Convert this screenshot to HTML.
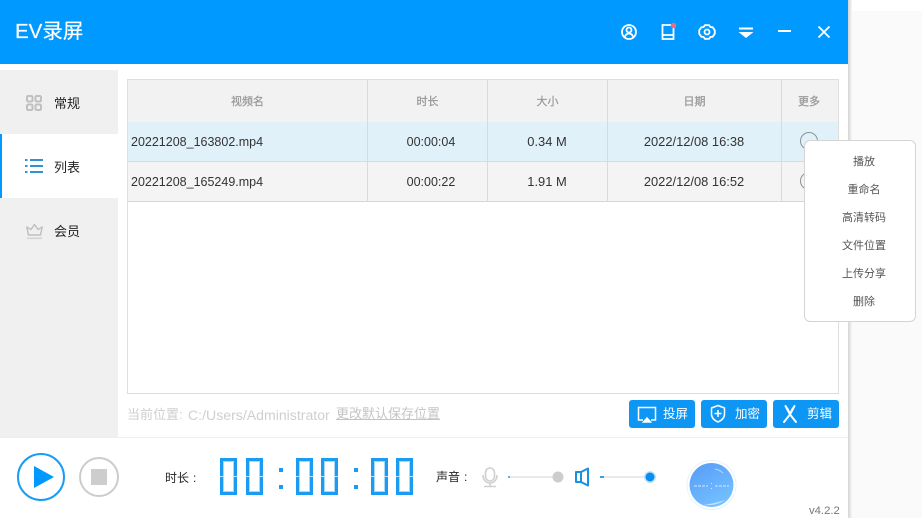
<!DOCTYPE html>
<html><head><meta charset="utf-8">
<style>
*{box-sizing:border-box;margin:0;padding:0}
html,body{width:922px;height:518px;overflow:hidden;background:#fff}
body{position:relative;font-family:"Liberation Sans","Noto Sans CJK SC",sans-serif;color:#333}
.a{position:absolute}
.t{position:absolute;white-space:nowrap;line-height:20px}
.c{text-align:center}
.th{font-size:11px;color:#999;top:92px;-webkit-text-stroke:.25px #999}
.td{font-size:12.5px;color:#333}
.dt{font-size:12.9px}
.side{font-size:13px;color:#222;left:54px;width:30px}
.m{font-size:11px;color:#555;left:804px;width:120px;text-align:center}
.btn{position:absolute;top:400px;width:66px;height:28px;background:#0e96f5;border-radius:3px}
.btn span{position:absolute;left:34px;top:4px;line-height:20px;font-size:12.5px;color:#fff;white-space:nowrap}
.btn svg{position:absolute;left:0;top:0}
.d{position:absolute;top:458px;width:17px;height:37px;border:3px solid #1a9cf2;box-shadow:inset 0 0 0 1px #a8d9fa;color:transparent;font-size:12px;line-height:20px;overflow:visible}
.d:before,.d:after{content:"";position:absolute;top:15px;height:1px;width:4px;background:#bfe3fb}
.d:before{left:-3px}.d:after{right:-3px}
.col{position:absolute;top:458px;width:5px;height:37px;color:transparent;font-size:12px;overflow:hidden}
.col:before,.col:after{content:"";position:absolute;left:0;width:4px;height:4px;background:#1a9cf2}
.col:before{top:10px}.col:after{top:27px}
</style></head>
<body>
<!-- backdrop right of window -->
<div class="a" style="left:848px;top:11px;width:74px;height:507px;background:#fafafa"></div>
<div class="a" style="left:848px;top:0;width:4px;height:518px;background:linear-gradient(90deg,#d4d4d4,#f6f6f6)"></div>

<!-- header -->
<div class="a" style="left:0;top:0;width:848px;height:64px;background:#0099ff"></div>
<div class="t" style="left:15px;top:20px;line-height:24px;font-size:20.500px;color:#fff;-webkit-text-stroke:.2px #fff">EV录屏</div>
<svg class="a" style="left:610px;top:12px" width="230" height="40" viewBox="610 12 230 40" fill="none" stroke="#fff" stroke-width="1.800">
  <circle cx="629" cy="32" r="7"/><circle cx="629" cy="30" r="2.500"/><path d="M624.500 37.500c1-3 2.500-4 4.500-4s3.500 1 4.500 4"/>
  <path d="M671 25h-8.500v14h11v-12M662.500 35h11"/>
  <circle cx="673.500" cy="25.500" r="2.800" fill="#f46a7c" stroke="none"/>
  <path d="M704.800 25.200h4.400l1.200 1.900 2.200 .1 2.200 3.100v3.400l-2.200 3.100-2.200 .1-1.200 1.900h-4.400l-1.200-1.900-2.200-.1-2.200-3.100v-3.400l2.200-3.100 2.200-.1z" stroke-linejoin="round"/><circle cx="707" cy="32" r="2.500"/>
  <path d="M739 28.500h14" stroke-width="2"/><path d="M738.500 32h15l-7.500 6z" fill="#fff" stroke="none"/>
  <path d="M778 31h13" stroke-width="2"/>
  <path d="M818.500 26.500l11 11M829.500 26.500l-11 11" stroke-width="1.800"/>
</svg>

<!-- sidebar -->
<div class="a" style="left:0;top:70px;width:118px;height:64px;background:#f0f0f0"></div>
<div class="a" style="left:0;top:198px;width:118px;height:239px;background:#f0f0f0"></div>
<div class="a" style="left:0;top:134px;width:2px;height:64px;background:#0099ff"></div>
<svg class="a" style="left:20px;top:90px" width="30" height="155" viewBox="20 90 30 155" fill="none" stroke="#c0c0c0" stroke-width="2">
  <rect x="27" y="96" width="5.500" height="5.500" rx="1.200"/><rect x="35.500" y="96" width="5.500" height="5.500" rx="1.200"/><rect x="27" y="104.500" width="5.500" height="5.500" rx="1.200"/><rect x="35.500" y="104.500" width="5.500" height="5.500" rx="1.200"/>
  <path d="M30 160h13M30 166h13M30 172h13" stroke="#2f93d0" stroke-width="2"/>
  <path d="M25 160h2.500M25 166h2.500M25 172h2.500" stroke="#2f93d0" stroke-width="2"/>
  <path d="M26.800 227l4.200 2.500 3.500-5 3.500 5 4.200-2.500-1.700 8h-12z" stroke-linejoin="round" stroke-width="1.500"/>
  <path d="M27 238.300h15" stroke="#d4d4d4" stroke-width="1.600"/>
</svg>
<div class="t side" style="top:94px">常规</div>
<div class="t side" style="top:158px">列表</div>
<div class="t side" style="top:222px">会员</div>

<!-- table -->
<div class="a" style="left:127px;top:79px;width:712px;height:315px;border:1px solid #dedede;background:#fff"></div>
<div class="a" style="left:128px;top:80px;width:710px;height:42px;background:#f2f2f2"></div>
<div class="a" style="left:128px;top:122px;width:710px;height:40px;background:#e1f1fa;border-bottom:1px solid #d6dde1"></div>
<div class="a" style="left:128px;top:162px;width:710px;height:40px;background:#f4f4f4;border-bottom:1px solid #d6d6d6"></div>
<div class="a" style="left:367px;top:80px;width:1px;height:122px;background:#dadada"></div>
<div class="a" style="left:487px;top:80px;width:1px;height:122px;background:#dadada"></div>
<div class="a" style="left:607px;top:80px;width:1px;height:122px;background:#dadada"></div>
<div class="a" style="left:781px;top:80px;width:1px;height:122px;background:#dadada"></div>

<div class="t th c" style="left:128px;width:239px">视频名</div>
<div class="t th c" style="left:368px;width:119px">时长</div>
<div class="t th c" style="left:488px;width:119px">大小</div>
<div class="t th c" style="left:608px;width:173px">日期</div>
<div class="t th c" style="left:782px;width:54px">更多</div>

<div class="t td" style="left:131px;top:132px">20221208_163802.mp4</div>
<div class="t td c" style="left:368px;width:126px;top:132px">00:00:04</div>
<div class="t td c dt" style="left:488px;width:118px;top:132px">0.34 M</div>
<div class="t td c dt" style="left:608px;width:172px;top:132px">2022/12/08 16:38</div>
<div class="t td" style="left:131px;top:172px">20221208_165249.mp4</div>
<div class="t td c" style="left:368px;width:126px;top:172px">00:00:22</div>
<div class="t td c dt" style="left:488px;width:118px;top:172px">1.91 M</div>
<div class="t td c dt" style="left:608px;width:172px;top:172px">2022/12/08 16:52</div>
<div class="a" style="left:800px;top:132px;width:18px;height:18px;border:1.500px solid #8c9296;border-radius:50%"></div>
<div class="a" style="left:800px;top:172px;width:18px;height:18px;border:1.500px solid #8c9296;border-radius:50%"></div>

<!-- popup -->
<div class="a" style="left:804px;top:140px;width:112px;height:182px;background:#fff;border:1px solid #d4d4d4;border-radius:6px"></div>
<div class="t m" style="top:152px">播放</div>
<div class="t m" style="top:180px">重命名</div>
<div class="t m" style="top:208px">高清转码</div>
<div class="t m" style="top:236px">文件位置</div>
<div class="t m" style="top:264px">上传分享</div>
<div class="t m" style="top:292px">删除</div>

<!-- path -->
<div class="t" style="left:127px;top:405px;font-size:13px;color:#cfcfcf">当前位置:</div>
<div class="t" style="left:188px;top:405px;font-size:14.100px;color:#cfcfcf">C:/Users/Administrator</div>
<div class="t" style="left:336px;top:404px;font-size:13px;color:#c4c4c4;text-decoration:underline">更改默认保存位置</div>

<!-- buttons -->
<div class="btn" style="left:629px">
  <svg width="66" height="28" fill="none" stroke="#fff" stroke-width="1.500"><path d="M14 20H9.500V7.500h17V20H22"/><path d="M14.500 22l3.500-4 3.500 4z" fill="#fff"/></svg>
  <span>投屏</span></div>
<div class="btn" style="left:701px">
  <svg width="66" height="28" fill="none" stroke="#fff" stroke-width="1.500"><path d="M17 5.500l6.500 2.500v6c0 4-3 6.500-6.500 8-3.500-1.500-6.500-4-6.500-8V8z" stroke-linejoin="round"/><path d="M13.500 13.500h7M17 10v7"/></svg>
  <span>加密</span></div>
<div class="btn" style="left:773px">
  <svg width="66" height="28" fill="none" stroke="#fff" stroke-width="2" stroke-linecap="round"><path d="M12.500 6l4.500 8.500 6 7.500"/><path d="M21.500 6l-4.500 8.500-6 7.500"/><path d="M14.500 8l2.500 5 2.500-5" stroke-width="1.200"/></svg>
  <span>剪辑</span></div>

<!-- bottom -->
<div class="a" style="left:0;top:437px;width:848px;height:1px;background:#eee"></div>
<svg class="a" style="left:10px;top:448px" width="115" height="60" viewBox="10 448 115 60">
  <circle cx="41" cy="477" r="23" fill="none" stroke="#1a9cf2" stroke-width="2"/>
  <path d="M34 466l20 11-20 11z" fill="#0099ff"/>
  <circle cx="99" cy="477" r="19" fill="none" stroke="#ccc" stroke-width="2"/>
  <rect x="91" y="469" width="16" height="16" fill="#cdcdcd"/>
</svg>
<div class="t" style="left:165px;top:468px;font-size:12px;color:#222">时长<span style="margin-left:4px">:</span></div>

<span class="d" style="left:220px">0</span><span class="d" style="left:246px">0</span>
<span class="col" style="left:279px">:</span>
<span class="d" style="left:296px">0</span><span class="d" style="left:321px">0</span>
<span class="col" style="left:354px">:</span>
<span class="d" style="left:371px">0</span><span class="d" style="left:396px">0</span>

<div class="t" style="left:436px;top:467px;font-size:12px;color:#222">声音<span style="margin-left:4px">:</span></div>
<svg class="a" style="left:478px;top:462px" width="185" height="30" viewBox="478 462 185 30" fill="none">
  <rect x="485.500" y="468" width="9" height="13" rx="4.500" stroke="#cfcfcf" stroke-width="1.600"/>
  <path d="M483 475c0 5 3 8 7 8s7-3 7-8M490 483v3M484 486.500h12" stroke="#cfcfcf" stroke-width="1.600"/>
  <path d="M508 477h50" stroke="#e4e4e4" stroke-width="1.500"/>
  <path d="M508 477h2" stroke="#1a9cf2" stroke-width="1.500"/>
  <circle cx="558" cy="477" r="5.500" fill="#cdcdcd"/>
  <path d="M576 472h5v10h-5zM581 472l7-3.500v17l-7-3.500" stroke="#1a90e0" stroke-width="2" stroke-linejoin="round"/>
  <path d="M600 477h50" stroke="#e4e4e4" stroke-width="1.500"/>
  <path d="M600 477h4" stroke="#1a9cf2" stroke-width="1.800"/>
  <circle cx="650" cy="477" r="6" fill="#bfe3fb"/>
  <circle cx="650" cy="477" r="4.500" fill="#0a8cf0"/>
</svg>

<!-- logo -->
<svg class="a" style="left:684px;top:458px" width="56" height="56" viewBox="684 458 56 56">
  <defs><linearGradient id="g" x1="0" y1="0" x2="0.600" y2="1"><stop offset="0" stop-color="#559bf8"/><stop offset="1" stop-color="#74bfff"/></linearGradient></defs>
  <circle cx="711.500" cy="485" r="25" fill="#e6f3fe"/>
  <circle cx="711.500" cy="485" r="24" fill="#fff"/>
  <circle cx="711.500" cy="485" r="22" fill="url(#g)"/>
  <path d="M694 486h14M715 486h14" stroke="#d4e6fd" stroke-width="1" stroke-dasharray="3 1"/>
  <path d="M711.500 483v1M711.500 488v1" stroke="#d4e6fd" stroke-width="1"/>
  <path d="M715 469c3 .5 6 2 8 4" stroke="#b9d9fb" stroke-width="1" fill="none"/>
  <path d="M703 505c8 1 17-1 22-5-6 2-14 4-22 5z" fill="#c4e3ff"/>
</svg>
<div class="t" style="left:809px;top:501px;font-size:11.300px;color:#777">v4.2.2</div>
</body></html>
